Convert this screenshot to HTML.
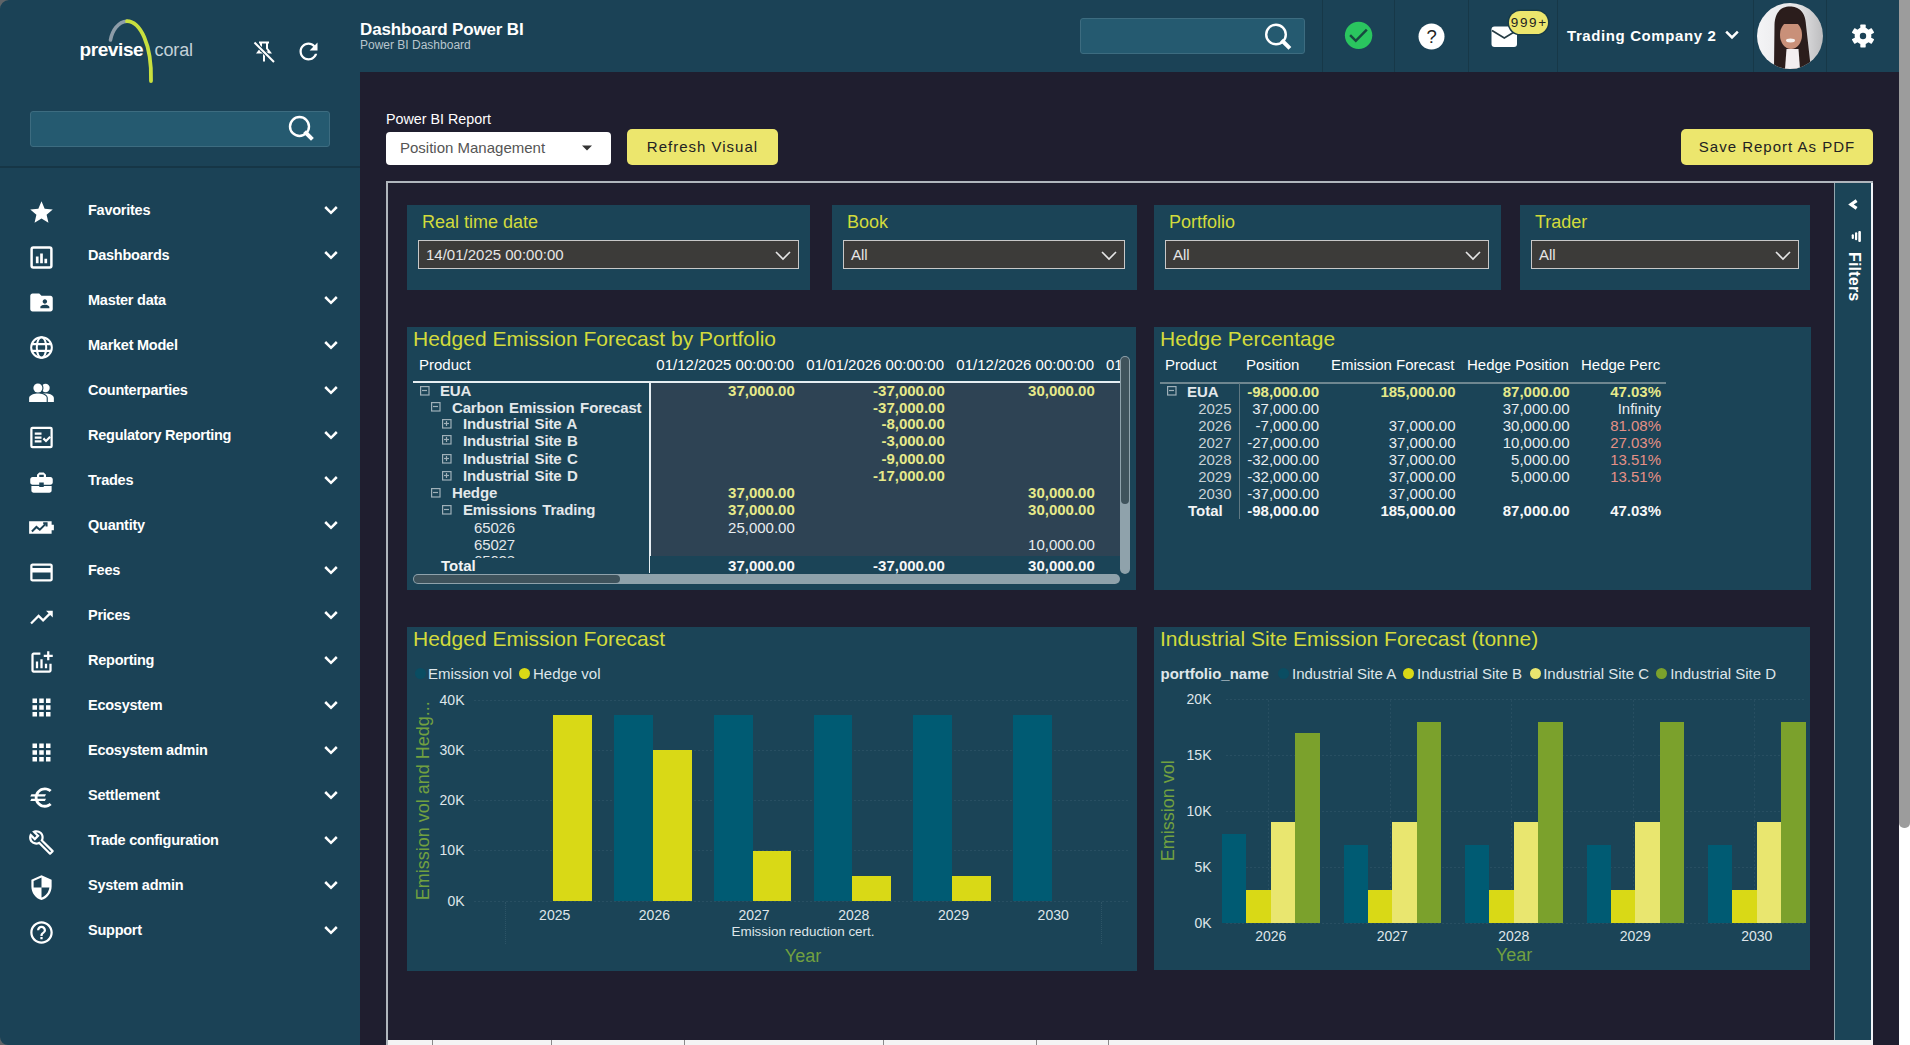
<!DOCTYPE html>
<html><head><meta charset="utf-8"><style>
*{margin:0;padding:0;box-sizing:border-box}
html,body{width:1910px;height:1045px;overflow:hidden;background:#1f1e2f;font-family:"Liberation Sans",sans-serif}
.a{position:absolute;white-space:nowrap}
#sb{position:absolute;left:0;top:0;width:360px;height:1045px;background:#1b4256}
#hd{position:absolute;left:360px;top:0;width:1539px;height:72px;background:#1b4256}
.mi{position:absolute;left:0;width:360px;height:45px;color:#fff}
.mi .t{position:absolute;left:88px;top:13.5px;font-weight:bold;font-size:14.5px;line-height:17px;letter-spacing:-0.25px;white-space:nowrap}
.mi svg.ic{position:absolute}
.mi svg.ch{position:absolute;left:319px;top:10px}
.card{position:absolute;background:#1b4457;overflow:hidden}
.ttl{position:absolute;color:#d2db3c;font-size:19px;white-space:nowrap}
.dd{position:absolute;background:#3c3b39;border:1.5px solid #c8c8c8;color:#e6e6e6;font-size:15px}
.dd span{position:absolute;left:7px;top:5px}
.dd svg{position:absolute;right:6px;top:8px}
.btn{position:absolute;background:#ece66d;border-radius:5px;color:#222;font-size:15px;letter-spacing:1px;text-align:center}
.vl{position:absolute;top:0;width:1px;height:72px;background:#173848}
</style></head><body>
<div id="sb"></div><div id="hd"></div><svg class="a" style="left:0;top:0" width="9" height="9"><path d="M0 0H9A9 9 0 0 0 0 9Z" fill="#5f6468"/></svg>
<svg class="a" style="left:60px;top:10px" width="160" height="80" viewBox="0 0 160 80">
<path d="M50.5 30 C 52 21, 58 11.5, 67 11.2" fill="none" stroke="#8d9ca8" stroke-width="3.6" stroke-linecap="round"/>
<path d="M67 11.2 C 80 11.5, 92 34, 91 71" fill="none" stroke="#c9e03e" stroke-width="3.8" stroke-linecap="round"/>
</svg>
<div class="a" style="left:79.5px;top:40.4px;color:#fff;font-size:19px;line-height:19px;font-weight:bold;letter-spacing:-0.4px">previse</div>
<div class="a" style="left:154.5px;top:41.3px;color:#c3d1d8;font-size:18px;line-height:18px;letter-spacing:-0.1px">coral</div>
<svg class="a" style="left:252px;top:40px" width="24" height="24" viewBox="0 0 24 24"><path d="M7 2.5h10M9 2.5v6l-3 4h12l-3-4v-6M12 12.5v9" fill="none" stroke="#fff" stroke-width="2"/><path d="M2 2l20 20" stroke="#1b4256" stroke-width="4"/><path d="M2.5 2.5l19.5 19.5" stroke="#fff" stroke-width="2"/></svg>
<svg class="a" style="left:295px;top:38px" width="27" height="27" viewBox="0 0 24 24"><path d="M17.65 6.35C16.2 4.9 14.21 4 12 4c-4.42 0-7.99 3.58-7.99 8s3.57 8 7.99 8c3.73 0 6.84-2.55 7.73-6h-2.08c-.82 2.33-3.04 4-5.65 4-3.31 0-6-2.69-6-6s2.69-6 6-6c1.66 0 3.14.69 4.22 1.78L13 11h7V4l-2.35 2.35z" fill="#fff"/></svg>
<div class="a" style="left:30px;top:111px;width:300px;height:36px;background:#255a70;border:1px solid #3d6c80;border-radius:3px"></div>
<svg class="a" style="left:287px;top:114px" width="28" height="28" viewBox="0 0 28 28"><circle cx="12.5" cy="12.5" r="9.5" fill="none" stroke="#fff" stroke-width="2.4"/><path d="M19 19l5 5" stroke="#fff" stroke-width="4" stroke-linecap="square"/></svg>
<div class="a" style="left:0;top:166px;width:360px;height:2px;background:#163646"></div>
<div class="mi" style="top:188px"><svg class="ic" style="left:28px;top:10.5px" width="27" height="27" viewBox="0 0 24 24" fill="#fff"><path d="M12 17.27L18.18 21l-1.64-7.03L22 9.24l-7.19-.61L12 2 9.19 8.63 2 9.24l5.46 4.73L5.82 21z"/></svg><span class="t">Favorites</span><svg class="ch" width="24" height="24" viewBox="0 0 24 24" fill="#fff"><path d="M6.2 9l5.8 5.8 5.8-5.8" fill="none" stroke="#fff" stroke-width="2.5"/></svg></div>
<div class="mi" style="top:233px"><svg class="ic" style="left:28px;top:10.5px" width="27" height="27" viewBox="0 0 24 24" fill="#fff"><rect x="3.2" y="3.2" width="17.6" height="17.6" rx="1.5" fill="none" stroke="#fff" stroke-width="2.2"/><path d="M7 11h2.4v6H7zM10.8 8.5h2.4V17h-2.4zM14.6 13h2.4v4h-2.4z"/></svg><span class="t">Dashboards</span><svg class="ch" width="24" height="24" viewBox="0 0 24 24" fill="#fff"><path d="M6.2 9l5.8 5.8 5.8-5.8" fill="none" stroke="#fff" stroke-width="2.5"/></svg></div>
<div class="mi" style="top:278px"><svg class="ic" style="left:28px;top:10.5px" width="27" height="27" viewBox="0 0 24 24" fill="#fff"><path d="M20 6h-8l-2-2H4c-1.1 0-1.99.9-1.99 2L2 18c0 1.1.9 2 2 2h16c1.1 0 2-.9 2-2V8c0-1.1-.9-2-2-2zm-5 3c1.1 0 2 .9 2 2s-.9 2-2 2-2-.9-2-2 .9-2 2-2zm4 8h-8v-1c0-1.33 2.67-2 4-2s4 .67 4 2v1z"/></svg><span class="t">Master data</span><svg class="ch" width="24" height="24" viewBox="0 0 24 24" fill="#fff"><path d="M6.2 9l5.8 5.8 5.8-5.8" fill="none" stroke="#fff" stroke-width="2.5"/></svg></div>
<div class="mi" style="top:323px"><svg class="ic" style="left:28px;top:10.5px" width="27" height="27" viewBox="0 0 24 24" fill="#fff"><g fill="none" stroke="#fff" stroke-width="1.8"><circle cx="12" cy="12" r="9.2"/><ellipse cx="12" cy="12" rx="4.2" ry="9.2"/><path d="M2.8 9h18.4M2.8 15h18.4"/></g></svg><span class="t">Market Model</span><svg class="ch" width="24" height="24" viewBox="0 0 24 24" fill="#fff"><path d="M6.2 9l5.8 5.8 5.8-5.8" fill="none" stroke="#fff" stroke-width="2.5"/></svg></div>
<div class="mi" style="top:368px"><svg class="ic" style="left:28px;top:10.5px" width="27" height="27" viewBox="0 0 24 24" fill="#fff"><circle cx="15.6" cy="8" r="3.7"/><path d="M13 13.2c1-.3 2-.4 2.8-.4 2.6 0 7.2 1.3 7.2 4v3.7H13z"/><circle cx="8.8" cy="8" r="5" fill="#1b4256"/><path d="M0 21.6v-4.8c0-3.2 5.6-4.8 8.8-4.8s8.8 1.6 8.8 4.8v4.8z" fill="#1b4256"/><circle cx="8.8" cy="8" r="4"/><path d="M1 20.5v-3.7c0-2.6 5-3.9 7.8-3.9s7.8 1.3 7.8 3.9v3.7z"/></svg><span class="t">Counterparties</span><svg class="ch" width="24" height="24" viewBox="0 0 24 24" fill="#fff"><path d="M6.2 9l5.8 5.8 5.8-5.8" fill="none" stroke="#fff" stroke-width="2.5"/></svg></div>
<div class="mi" style="top:413px"><svg class="ic" style="left:28px;top:10.5px" width="27" height="27" viewBox="0 0 24 24" fill="#fff"><g fill="none" stroke="#fff" stroke-width="2"><rect x="3" y="3.5" width="18" height="17" rx="1"/></g><path d="M6 7.5h6v2H6zM6 11h6v2H6zM6 14.5h6v2H6z"/><path d="M13 13.5l1.4-1.4 1.6 1.6 3-3 1.4 1.4-4.4 4.4z"/></svg><span class="t">Regulatory Reporting</span><svg class="ch" width="24" height="24" viewBox="0 0 24 24" fill="#fff"><path d="M6.2 9l5.8 5.8 5.8-5.8" fill="none" stroke="#fff" stroke-width="2.5"/></svg></div>
<div class="mi" style="top:458px"><svg class="ic" style="left:28px;top:10.5px" width="27" height="27" viewBox="0 0 24 24" fill="#fff"><path d="M10 16v-1H3.01L3 19c0 1.11.89 2 2 2h14c1.11 0 2-.89 2-2v-4h-7v1h-4zm10-9h-4.01V5l-2-2h-4l-2 2v2H4c-1.1 0-2 .9-2 2v3c0 1.11.89 2 2 2h6v-2h4v2h6c1.1 0 2-.9 2-2V9c0-1.1-.9-2-2-2zm-6 0h-4V5h4v2z"/></svg><span class="t">Trades</span><svg class="ch" width="24" height="24" viewBox="0 0 24 24" fill="#fff"><path d="M6.2 9l5.8 5.8 5.8-5.8" fill="none" stroke="#fff" stroke-width="2.5"/></svg></div>
<div class="mi" style="top:503px"><svg class="ic" style="left:28px;top:10.5px" width="27" height="27" viewBox="0 0 24 24" fill="#fff"><path d="M1 6.5h20v3h2v5h-2v3H1z"/><path d="M3.5 15.5l4-4 3 2.5 5-5" fill="none" stroke="#1b4256" stroke-width="1.8"/><path d="M13.5 8.2h3v3" fill="none" stroke="#1b4256" stroke-width="1.8"/></svg><span class="t">Quantity</span><svg class="ch" width="24" height="24" viewBox="0 0 24 24" fill="#fff"><path d="M6.2 9l5.8 5.8 5.8-5.8" fill="none" stroke="#fff" stroke-width="2.5"/></svg></div>
<div class="mi" style="top:548px"><svg class="ic" style="left:28px;top:10.5px" width="27" height="27" viewBox="0 0 24 24" fill="#fff"><path d="M20 4H4c-1.11 0-1.99.89-1.99 2L2 18c0 1.11.89 2 2 2h16c1.11 0 2-.89 2-2V6c0-1.11-.89-2-2-2zm0 14H4v-6h16v6zm0-10H4V6h16v2z"/></svg><span class="t">Fees</span><svg class="ch" width="24" height="24" viewBox="0 0 24 24" fill="#fff"><path d="M6.2 9l5.8 5.8 5.8-5.8" fill="none" stroke="#fff" stroke-width="2.5"/></svg></div>
<div class="mi" style="top:593px"><svg class="ic" style="left:28px;top:10.5px" width="27" height="27" viewBox="0 0 24 24" fill="#fff"><path d="M16 6l2.29 2.29-4.88 4.88-4-4L2 16.59 3.41 18l6-6 4 4 6.3-6.29L22 12V6z"/></svg><span class="t">Prices</span><svg class="ch" width="24" height="24" viewBox="0 0 24 24" fill="#fff"><path d="M6.2 9l5.8 5.8 5.8-5.8" fill="none" stroke="#fff" stroke-width="2.5"/></svg></div>
<div class="mi" style="top:638px"><svg class="ic" style="left:28px;top:10.5px" width="27" height="27" viewBox="0 0 24 24" fill="#fff"><path d="M22 5v2h-3v3h-2V7h-3V5h3V2h2v3h3zm-3 14H5V5h6V3H5c-1.1 0-2 .9-2 2v14c0 1.1.9 2 2 2h14c1.1 0 2-.9 2-2v-6h-2v6zm-4-6v4h2v-4h-2zm-4 4h2V9h-2v8zm-2 0v-6H7v6h2z"/></svg><span class="t">Reporting</span><svg class="ch" width="24" height="24" viewBox="0 0 24 24" fill="#fff"><path d="M6.2 9l5.8 5.8 5.8-5.8" fill="none" stroke="#fff" stroke-width="2.5"/></svg></div>
<div class="mi" style="top:683px"><svg class="ic" style="left:28px;top:10.5px" width="27" height="27" viewBox="0 0 24 24" fill="#fff"><path d="M4 8h4V4H4v4zm6 12h4v-4h-4v4zm-6 0h4v-4H4v4zm0-6h4v-4H4v4zm6 0h4v-4h-4v4zm6-10v4h4V4h-4zm-6 4h4V4h-4v4zm6 6h4v-4h-4v4zm0 6h4v-4h-4v4z"/></svg><span class="t">Ecosystem</span><svg class="ch" width="24" height="24" viewBox="0 0 24 24" fill="#fff"><path d="M6.2 9l5.8 5.8 5.8-5.8" fill="none" stroke="#fff" stroke-width="2.5"/></svg></div>
<div class="mi" style="top:728px"><svg class="ic" style="left:28px;top:10.5px" width="27" height="27" viewBox="0 0 24 24" fill="#fff"><path d="M4 8h4V4H4v4zm6 12h4v-4h-4v4zm-6 0h4v-4H4v4zm0-6h4v-4H4v4zm6 0h4v-4h-4v4zm6-10v4h4V4h-4zm-6 4h4V4h-4v4zm6 6h4v-4h-4v4zm0 6h4v-4h-4v4z"/></svg><span class="t">Ecosystem admin</span><svg class="ch" width="24" height="24" viewBox="0 0 24 24" fill="#fff"><path d="M6.2 9l5.8 5.8 5.8-5.8" fill="none" stroke="#fff" stroke-width="2.5"/></svg></div>
<div class="mi" style="top:773px"><svg class="ic" style="left:28px;top:10.5px" width="27" height="27" viewBox="0 0 24 24" fill="#fff"><path d="M15 18.5c-2.51 0-4.68-1.42-5.76-3.5H15l1-2H8.58c-.05-.33-.08-.66-.08-1s.03-.67.08-1H15l1-2H9.24C10.32 6.92 12.5 5.5 15 5.5c1.61 0 3.09.59 4.23 1.57L21 5.3C19.41 3.87 17.3 3 15 3c-3.92 0-7.24 2.510-8.48 6H3l-1 2h4.06c-.04.33-.06.66-.06 1s.02.67.06 1H3l-1 2h4.52c1.24 3.49 4.56 6 8.48 6 2.310 0 4.41-.87 6-2.3l-1.78-1.77c-1.13.98-2.6 1.57-4.22 1.57z"/></svg><span class="t">Settlement</span><svg class="ch" width="24" height="24" viewBox="0 0 24 24" fill="#fff"><path d="M6.2 9l5.8 5.8 5.8-5.8" fill="none" stroke="#fff" stroke-width="2.5"/></svg></div>
<div class="mi" style="top:818px"><svg class="ic" style="left:28px;top:10.5px" width="27" height="27" viewBox="0 0 24 24" fill="#fff"><path d="M22.61 18.99l-9.08-9.08c.93-2.34.45-5.1-1.44-7C9.79.61 6.21.4 3.66 2.26L7.5 6.11 6.08 7.52 2.25 3.690C.39 6.23.6 9.82 2.9 12.11c1.86 1.86 4.57 2.35 6.89 1.48l9.11 9.11c.39.39 1.02.39 1.41 0l2.3-2.3c.4-.38.4-1.01 0-1.41zm-3 1.6l-9.46-9.46c-.61.45-1.29.72-2 .82-1.360.2-2.79-.21-3.83-1.25C3.37 9.76 2.93 8.5 3 7.26l3.09 3.09 4.24-4.24-3.09-3.09c1.24-.07 2.49.37 3.44 1.31 1.08 1.08 1.49 2.57 1.24 3.96-.12.71-.42 1.37-.88 1.96l9.45 9.45-.88.89z"/></svg><span class="t">Trade configuration</span><svg class="ch" width="24" height="24" viewBox="0 0 24 24" fill="#fff"><path d="M6.2 9l5.8 5.8 5.8-5.8" fill="none" stroke="#fff" stroke-width="2.5"/></svg></div>
<div class="mi" style="top:863px"><svg class="ic" style="left:28px;top:10.5px" width="27" height="27" viewBox="0 0 24 24" fill="#fff"><path d="M12 1L3 5v6c0 5.55 3.84 10.74 9 12 5.16-1.26 9-6.450 9-12V5l-9-4zm0 10.99h7c-.53 4.12-3.28 7.79-7 8.94V12H5V6.3l7-3.11v8.8z"/></svg><span class="t">System admin</span><svg class="ch" width="24" height="24" viewBox="0 0 24 24" fill="#fff"><path d="M6.2 9l5.8 5.8 5.8-5.8" fill="none" stroke="#fff" stroke-width="2.5"/></svg></div>
<div class="mi" style="top:908px"><svg class="ic" style="left:28px;top:10.5px" width="27" height="27" viewBox="0 0 24 24" fill="#fff"><path d="M11 18h2v-2h-2v2zm1-16C6.48 2 2 6.48 2 12s4.48 10 10 10 10-4.48 10-10S17.52 2 12 2zm0 18c-4.41 0-8-3.59-8-8s3.59-8 8-8 8 3.59 8 8-3.59 8-8 8zm0-14c-2.21 0-4 1.79-4 4h2c0-1.1.9-2 2-2s2 .9 2 2c0 2-3 1.75-3 5h2c0-2.25 3-2.5 3-5 0-2.21-1.790-4-4-4z"/></svg><span class="t">Support</span><svg class="ch" width="24" height="24" viewBox="0 0 24 24" fill="#fff"><path d="M6.2 9l5.8 5.8 5.8-5.8" fill="none" stroke="#fff" stroke-width="2.5"/></svg></div>
<div class="a" style="left:360px;top:20.6px;color:#fff;font-size:17px;line-height:17px;font-weight:bold;letter-spacing:-0.15px">Dashboard Power BI</div>
<div class="a" style="left:360px;top:38.8px;color:#b9c6ce;font-size:12px;line-height:12px">Power BI Dashboard</div>
<div class="a" style="left:1080px;top:18px;width:225px;height:36px;background:#255a70;border:1px solid #3d6c80;border-radius:3px"></div>
<svg class="a" style="left:1262px;top:21px" width="30" height="30" viewBox="0 0 30 30"><circle cx="14" cy="13.5" r="9.8" fill="none" stroke="#fff" stroke-width="2.4"/><path d="M21 20.5l5.5 5.5" stroke="#fff" stroke-width="4" stroke-linecap="square"/></svg>
<div class="vl" style="left:1322px"></div><div class="vl" style="left:1394px"></div><div class="vl" style="left:1468px"></div><div class="vl" style="left:1557px"></div><div class="vl" style="left:1753px"></div><div class="vl" style="left:1826px"></div>
<svg class="a" style="left:1344px;top:20.5px" width="29" height="29" viewBox="0 0 29 29"><circle cx="14.6" cy="14.35" r="13.7" fill="#2ac55f"/><path d="M6.1 14.1l5.7 5.7 11-11.2" fill="none" stroke="#17483f" stroke-width="2.5"/></svg>
<svg class="a" style="left:1418px;top:23px" width="27" height="27" viewBox="0 0 27 27"><circle cx="13.5" cy="13.5" r="13" fill="#fff"/><text x="13.6" y="20.2" font-family="Liberation Sans" font-size="18.5" text-anchor="middle" fill="#222">?</text></svg>
<svg class="a" style="left:1491px;top:26px" width="27" height="22" viewBox="0 0 27 22"><rect x="0.5" y="0.5" width="25.5" height="20.5" rx="3" fill="#fff"/><path d="M1 4.5l12.3 7.5 12.3-7.5" fill="none" stroke="#263c44" stroke-width="1.6"/></svg>
<div class="a" style="left:1509px;top:11px;width:39px;height:23px;border-radius:12px;background:#ece66d;color:#222;font-size:13.5px;text-align:center;line-height:23px;letter-spacing:1.6px;text-indent:1.5px;box-shadow:0 0 0 1.5px #173a48">999+</div>
<div class="a" style="left:1567px;top:27px;color:#fff;font-size:15px;font-weight:bold;letter-spacing:0.6px">Trading Company 2</div>
<svg class="a" style="left:1722px;top:25px" width="20" height="20" viewBox="0 0 24 24"><path d="M5 8l7 7 7-7" fill="none" stroke="#fff" stroke-width="3"/></svg>
<svg class="a" style="left:1757px;top:3px" width="66" height="66" viewBox="0 0 66 66"><defs><clipPath id="avc"><circle cx="33" cy="33" r="33"/></clipPath><linearGradient id="avg" x1="0" y1="0" x2="1" y2="0"><stop offset="0" stop-color="#f4f4f6"/><stop offset="0.6" stop-color="#e6e6e8"/><stop offset="1" stop-color="#bdbdbf"/></linearGradient></defs><g clip-path="url(#avc)"><rect width="66" height="66" fill="url(#avg)"/><path d="M17 64 L17.5 22 C18 8 25 3.5 33 3.5 C41 3.5 48.5 8 49 22 L53.5 62 L46 66 L24 66 Z" fill="#2b1d1c"/><ellipse cx="34" cy="32" rx="11" ry="14" fill="#c99079"/><path d="M21.5 21 L22.5 12 C24 6 29 4.5 33.5 4.5 C38 4.5 44 6 45.5 12 L46.5 21 Z" fill="#2b1d1c"/><path d="M28 66 L29.5 46 L41.5 46 L43 66 Z" fill="#f3eef0"/><ellipse cx="33.5" cy="37.5" rx="4.5" ry="1.9" fill="#f6f0ee"/></g></svg>
<svg class="a" style="left:1851px;top:24.4px" width="24" height="24" viewBox="0 0 24 24"><g fill="#fff"><circle cx="12" cy="12" r="8.4"/><rect x="9.3" y="0.6" width="5.4" height="5" rx="0.6" transform="rotate(0 12 12)"/><rect x="9.3" y="0.6" width="5.4" height="5" rx="0.6" transform="rotate(60 12 12)"/><rect x="9.3" y="0.6" width="5.4" height="5" rx="0.6" transform="rotate(120 12 12)"/><rect x="9.3" y="0.6" width="5.4" height="5" rx="0.6" transform="rotate(180 12 12)"/><rect x="9.3" y="0.6" width="5.4" height="5" rx="0.6" transform="rotate(240 12 12)"/><rect x="9.3" y="0.6" width="5.4" height="5" rx="0.6" transform="rotate(300 12 12)"/></g><circle cx="12" cy="12" r="3.2" fill="#1b4256"/></svg>

<div class="a" style="left:1899px;top:0;width:11px;height:1045px;background:#fff"></div>
<div class="a" style="left:1899px;top:0;width:11px;height:828px;background:#9c9c9c;border-radius:0 0 5px 5px"></div>
<div class="a" style="left:386px;top:112.3px;color:#fff;font-size:14.3px;line-height:14.3px">Power BI Report</div>
<div class="a" style="left:386px;top:132px;width:225px;height:33px;background:#fff;border-radius:4px"></div>
<div class="a" style="left:400px;top:139px;color:#555;font-size:15px">Position Management</div>
<svg class="a" style="left:581px;top:144px" width="12" height="8" viewBox="0 0 12 8"><path d="M1 1.5h10L6 6.5z" fill="#333"/></svg>
<div class="btn" style="left:627px;top:129px;width:151px;height:36px;line-height:36px">Refresh Visual</div>
<div class="btn" style="left:1681px;top:129px;width:192px;height:36px;line-height:36px">Save Report As PDF</div>

<div class="a" style="left:386px;top:181px;width:1487px;height:900px;border:2px solid #b0b6bd"></div>
<div class="a" style="left:1834px;top:183px;width:37px;height:857px;background:#1b4457;border-left:1.5px solid #93a6ae"></div>
<div class="a" style="left:1871px;top:183px;width:2px;height:880px;background:#f0f4f8"></div>
<svg class="a" style="left:1848px;top:199px" width="11" height="11" viewBox="0 0 11 11"><path d="M8.6 1.6L3 5.5l5.6 3.9" fill="none" stroke="#fff" stroke-width="3.2" stroke-linejoin="miter"/></svg>
<svg class="a" style="left:1850px;top:230px" width="12" height="13" viewBox="0 0 12 13"><rect x="1.7" y="4.3" width="2.2" height="4.8" rx="1" fill="#fff"/><rect x="5" y="2.2" width="2.2" height="8.1" rx="1" fill="#fff"/><rect x="8.3" y="1" width="2.6" height="11" rx="1" fill="#fff"/></svg>
<div class="a" style="left:1843px;top:251.5px;width:20px;height:50px;"><div style="position:absolute;left:0;top:0;transform-origin:0 0;transform:translate(18.8px,0) rotate(90deg);color:#fff;font-size:16px;line-height:16px;font-weight:bold;letter-spacing:0.2px">Filters</div></div>
<div class="a" style="left:388px;top:1040px;width:1484px;height:5px;background:#f4f4f4"></div><div class="a" style="left:432px;top:1040px;width:1px;height:5px;background:#8a8a8a"></div><div class="a" style="left:551px;top:1040px;width:1px;height:5px;background:#8a8a8a"></div><div class="a" style="left:684px;top:1040px;width:1px;height:5px;background:#8a8a8a"></div><div class="a" style="left:883px;top:1040px;width:1px;height:5px;background:#8a8a8a"></div><div class="a" style="left:1036px;top:1040px;width:1px;height:5px;background:#8a8a8a"></div><div class="a" style="left:1108px;top:1040px;width:1px;height:5px;background:#8a8a8a"></div><svg class="a" style="left:0;top:1037px" width="8" height="8"><path d="M0 0A8 8 0 0 0 8 8H0Z" fill="#5f6468"/></svg>

<div class="card" style="left:407px;top:205px;width:403px;height:85px">
<div class="ttl" style="left:15px;top:7px;font-size:18px">Real time date</div>
<div class="dd" style="left:11px;top:35px;width:381px;height:29px"><span>14/01/2025 00:00:00</span>
<svg width="18" height="12" viewBox="0 0 18 12"><path d="M2 3l7 7 7-7" fill="none" stroke="#e6e6e6" stroke-width="1.6"/></svg></div></div>
<div class="card" style="left:832px;top:205px;width:305px;height:85px">
<div class="ttl" style="left:15px;top:7px;font-size:18px">Book</div>
<div class="dd" style="left:11px;top:35px;width:282px;height:29px"><span>All</span>
<svg width="18" height="12" viewBox="0 0 18 12"><path d="M2 3l7 7 7-7" fill="none" stroke="#e6e6e6" stroke-width="1.6"/></svg></div></div>
<div class="card" style="left:1154px;top:205px;width:347px;height:85px">
<div class="ttl" style="left:15px;top:7px;font-size:18px">Portfolio</div>
<div class="dd" style="left:11px;top:35px;width:324px;height:29px"><span>All</span>
<svg width="18" height="12" viewBox="0 0 18 12"><path d="M2 3l7 7 7-7" fill="none" stroke="#e6e6e6" stroke-width="1.6"/></svg></div></div>
<div class="card" style="left:1520px;top:205px;width:290px;height:85px">
<div class="ttl" style="left:15px;top:7px;font-size:18px">Trader</div>
<div class="dd" style="left:11px;top:35px;width:268px;height:29px"><span>All</span>
<svg width="18" height="12" viewBox="0 0 18 12"><path d="M2 3l7 7 7-7" fill="none" stroke="#e6e6e6" stroke-width="1.6"/></svg></div></div>
<div class="card" style="left:407px;top:327px;width:729px;height:263px"></div>
<div class="a" style="left:413px;top:326px;color:#d2db3c;font-size:21px;line-height:26px">Hedged Emission Forecast by Portfolio</div>
<div class="a" style="left:650px;top:383px;width:470px;height:173px;background:#2e4354"></div>
<div class="a" style="left:407px;top:350px;width:714px;height:32px;overflow:hidden"><div class="a" style="left:12px;top:6px;color:#fff;font-size:15px">Product</div><div class="a" style="right:327px;top:6px;color:#fff;font-size:15px">01/12/2025 00:00:00</div><div class="a" style="right:177px;top:6px;color:#fff;font-size:15px">01/01/2026 00:00:00</div><div class="a" style="right:27px;top:6px;color:#fff;font-size:15px">01/12/2026 00:00:00</div><div class="a" style="left:699px;top:6px;color:#fff;font-size:15px">01/12/2027 00:00:00</div></div>
<div class="a" style="left:413px;top:381px;width:708px;height:2px;background:#e6eef2"></div>
<div class="a" style="left:649px;top:383px;width:1.5px;height:190px;background:#e6eef2"></div>
<div class="a" style="left:407px;top:383px;width:714px;height:175px;overflow:hidden">
<svg class="a" style="left:13px;top:2.5px" width="10" height="10" viewBox="0 0 10 10"><rect x="0.6" y="0.6" width="8.4" height="8.4" fill="none" stroke="#9fb0b8" stroke-width="1.2"/><path d="M2 4.5h5" stroke="#9fb0b8" stroke-width="1.2"/></svg>
<div class="a" style="left:33px;top:-1.3000000000000007px;color:#e3e8eb;font-size:15px;font-weight:bold;letter-spacing:Nonepx;line-height:17px;word-spacing:1.5px;letter-spacing:-0.15px">EUA</div>
<div class="a" style="right:326.20000000000005px;top:-1.3000000000000007px;color:#e6e98a;font-size:15px;font-weight:bold;line-height:17px">37,000.00</div>
<div class="a" style="right:176.20000000000005px;top:-1.3000000000000007px;color:#e6e98a;font-size:15px;font-weight:bold;line-height:17px">-37,000.00</div>
<div class="a" style="right:26.200000000000045px;top:-1.3000000000000007px;color:#e6e98a;font-size:15px;font-weight:bold;line-height:17px">30,000.00</div>
<svg class="a" style="left:24px;top:19.399999999999977px" width="10" height="10" viewBox="0 0 10 10"><rect x="0.6" y="0.6" width="8.4" height="8.4" fill="none" stroke="#9fb0b8" stroke-width="1.2"/><path d="M2 4.5h5" stroke="#9fb0b8" stroke-width="1.2"/></svg>
<div class="a" style="left:45px;top:15.599999999999977px;color:#e3e8eb;font-size:15px;font-weight:bold;letter-spacing:Nonepx;line-height:17px;word-spacing:1.5px;letter-spacing:-0.15px">Carbon Emission Forecast</div>
<div class="a" style="right:176.20000000000005px;top:15.599999999999977px;color:#e6e98a;font-size:15px;font-weight:bold;line-height:17px">-37,000.00</div>
<svg class="a" style="left:35px;top:35.80000000000001px" width="10" height="10" viewBox="0 0 10 10"><rect x="0.6" y="0.6" width="8.4" height="8.4" fill="none" stroke="#9fb0b8" stroke-width="1.2"/><path d="M2 4.5h5" stroke="#9fb0b8" stroke-width="1.2"/><path d="M4.5 2v5" stroke="#9fb0b8" stroke-width="1.2"/></svg>
<div class="a" style="left:56px;top:32.000000000000014px;color:#e3e8eb;font-size:15px;font-weight:bold;letter-spacing:Nonepx;line-height:17px;word-spacing:1.5px;letter-spacing:-0.15px">Industrial Site A</div>
<div class="a" style="right:176.20000000000005px;top:32.000000000000014px;color:#e6e98a;font-size:15px;font-weight:bold;line-height:17px">-8,000.00</div>
<svg class="a" style="left:35px;top:52.39999999999998px" width="10" height="10" viewBox="0 0 10 10"><rect x="0.6" y="0.6" width="8.4" height="8.4" fill="none" stroke="#9fb0b8" stroke-width="1.2"/><path d="M2 4.5h5" stroke="#9fb0b8" stroke-width="1.2"/><path d="M4.5 2v5" stroke="#9fb0b8" stroke-width="1.2"/></svg>
<div class="a" style="left:56px;top:48.59999999999998px;color:#e3e8eb;font-size:15px;font-weight:bold;letter-spacing:Nonepx;line-height:17px;word-spacing:1.5px;letter-spacing:-0.15px">Industrial Site B</div>
<div class="a" style="right:176.20000000000005px;top:48.59999999999998px;color:#e6e98a;font-size:15px;font-weight:bold;line-height:17px">-3,000.00</div>
<svg class="a" style="left:35px;top:70.5px" width="10" height="10" viewBox="0 0 10 10"><rect x="0.6" y="0.6" width="8.4" height="8.4" fill="none" stroke="#9fb0b8" stroke-width="1.2"/><path d="M2 4.5h5" stroke="#9fb0b8" stroke-width="1.2"/><path d="M4.5 2v5" stroke="#9fb0b8" stroke-width="1.2"/></svg>
<div class="a" style="left:56px;top:66.7px;color:#e3e8eb;font-size:15px;font-weight:bold;letter-spacing:Nonepx;line-height:17px;word-spacing:1.5px;letter-spacing:-0.15px">Industrial Site C</div>
<div class="a" style="right:176.20000000000005px;top:66.7px;color:#e6e98a;font-size:15px;font-weight:bold;line-height:17px">-9,000.00</div>
<svg class="a" style="left:35px;top:87.5px" width="10" height="10" viewBox="0 0 10 10"><rect x="0.6" y="0.6" width="8.4" height="8.4" fill="none" stroke="#9fb0b8" stroke-width="1.2"/><path d="M2 4.5h5" stroke="#9fb0b8" stroke-width="1.2"/><path d="M4.5 2v5" stroke="#9fb0b8" stroke-width="1.2"/></svg>
<div class="a" style="left:56px;top:83.7px;color:#e3e8eb;font-size:15px;font-weight:bold;letter-spacing:Nonepx;line-height:17px;word-spacing:1.5px;letter-spacing:-0.15px">Industrial Site D</div>
<div class="a" style="right:176.20000000000005px;top:83.7px;color:#e6e98a;font-size:15px;font-weight:bold;line-height:17px">-17,000.00</div>
<svg class="a" style="left:24px;top:104.5px" width="10" height="10" viewBox="0 0 10 10"><rect x="0.6" y="0.6" width="8.4" height="8.4" fill="none" stroke="#9fb0b8" stroke-width="1.2"/><path d="M2 4.5h5" stroke="#9fb0b8" stroke-width="1.2"/></svg>
<div class="a" style="left:45px;top:100.7px;color:#e3e8eb;font-size:15px;font-weight:bold;letter-spacing:Nonepx;line-height:17px;word-spacing:1.5px;letter-spacing:-0.15px">Hedge</div>
<div class="a" style="right:326.20000000000005px;top:100.7px;color:#e6e98a;font-size:15px;font-weight:bold;line-height:17px">37,000.00</div>
<div class="a" style="right:26.200000000000045px;top:100.7px;color:#e6e98a;font-size:15px;font-weight:bold;line-height:17px">30,000.00</div>
<svg class="a" style="left:35px;top:121.5px" width="10" height="10" viewBox="0 0 10 10"><rect x="0.6" y="0.6" width="8.4" height="8.4" fill="none" stroke="#9fb0b8" stroke-width="1.2"/><path d="M2 4.5h5" stroke="#9fb0b8" stroke-width="1.2"/></svg>
<div class="a" style="left:56px;top:117.7px;color:#e3e8eb;font-size:15px;font-weight:bold;letter-spacing:Nonepx;line-height:17px;word-spacing:1.5px;letter-spacing:-0.15px">Emissions Trading</div>
<div class="a" style="right:326.20000000000005px;top:117.7px;color:#e6e98a;font-size:15px;font-weight:bold;line-height:17px">37,000.00</div>
<div class="a" style="right:26.200000000000045px;top:117.7px;color:#e6e98a;font-size:15px;font-weight:bold;line-height:17px">30,000.00</div>
<div class="a" style="left:67px;top:135.49999999999994px;color:#e3e8eb;font-size:15px;font-weight:normal;letter-spacing:Nonepx;line-height:17px;word-spacing:1.5px;letter-spacing:-0.15px">65026</div>
<div class="a" style="right:326.20000000000005px;top:135.49999999999994px;color:#e8edf0;font-size:15px;font-weight:normal;line-height:17px">25,000.00</div>
<div class="a" style="left:67px;top:152.7px;color:#e3e8eb;font-size:15px;font-weight:normal;letter-spacing:Nonepx;line-height:17px;word-spacing:1.5px;letter-spacing:-0.15px">65027</div>
<div class="a" style="right:26.200000000000045px;top:152.7px;color:#e8edf0;font-size:15px;font-weight:normal;line-height:17px">10,000.00</div>
<div class="a" style="left:67px;top:168.7px;color:#e3e8eb;font-size:15px;font-weight:normal;letter-spacing:Nonepx;line-height:17px;word-spacing:1.5px;letter-spacing:-0.15px">65028</div>
</div>
<div class="a" style="left:650px;top:556px;width:470px;height:17px;background:#1b4457"></div>
<div class="a" style="left:441px;top:557.2px;color:#f2f4f5;font-size:15px;font-weight:bold;letter-spacing:0px;line-height:17px">Total</div>
<div class="a" style="right:1115.2px;top:557.2px;color:#f7f7f7;font-size:15px;font-weight:bold;letter-spacing:0px;line-height:17px">37,000.00</div>
<div class="a" style="right:965.2px;top:557.2px;color:#f7f7f7;font-size:15px;font-weight:bold;letter-spacing:0px;line-height:17px">-37,000.00</div>
<div class="a" style="right:815.2px;top:557.2px;color:#f7f7f7;font-size:15px;font-weight:bold;letter-spacing:0px;line-height:17px">30,000.00</div>
<div class="a" style="left:1120px;top:356px;width:10px;height:218px;background:#8fa2ab;border-radius:5px"></div>
<div class="a" style="left:1121.2px;top:357.2px;width:7.6px;height:147px;background:#3f535c;border-radius:4px"></div>
<div class="a" style="left:413px;top:574px;width:707px;height:10px;background:#8fa2ab;border-radius:5px"></div>
<div class="a" style="left:414.2px;top:575.2px;width:206px;height:7.6px;background:#3f535c;border-radius:4px"></div>
<div class="card" style="left:1154px;top:327px;width:657px;height:263px"></div>
<div class="a" style="left:1160px;top:326px;color:#d2db3c;font-size:21px;line-height:26px">Hedge Percentage</div>
<div class="a" style="left:1165px;top:356px;color:#fff;font-size:15px">Product</div>
<div class="a" style="left:1246px;top:356px;color:#fff;font-size:15px">Position</div>
<div class="a" style="left:1331px;top:356px;color:#fff;font-size:15px">Emission Forecast</div>
<div class="a" style="left:1467px;top:356px;color:#fff;font-size:15px">Hedge Position</div>
<div class="a" style="left:1581px;top:356px;color:#fff;font-size:15px">Hedge Perc</div>
<div class="a" style="left:1160px;top:382px;width:506px;height:1.5px;background:#6f8790"></div>
<div class="a" style="left:1239px;top:383px;width:1px;height:136px;background:#5f7882"></div>
<svg class="a" style="left:1167px;top:385.5px" width="10" height="10" viewBox="0 0 10 10"><rect x="0.6" y="0.6" width="8.4" height="8.4" fill="none" stroke="#9fb0b8" stroke-width="1.2"/><path d="M2 4.5h5" stroke="#9fb0b8" stroke-width="1.2"/></svg>
<div class="a" style="left:1187px;top:382.8px;color:#e3e8eb;font-size:15px;font-weight:bold;letter-spacing:0px;line-height:17px">EUA</div>
<div class="a" style="right:591px;top:382.8px;color:#e6e98a;font-size:15px;font-weight:bold;letter-spacing:0px;line-height:17px">-98,000.00</div>
<div class="a" style="right:454.5px;top:382.8px;color:#e6e98a;font-size:15px;font-weight:bold;letter-spacing:0px;line-height:17px">185,000.00</div>
<div class="a" style="right:340.5px;top:382.8px;color:#e6e98a;font-size:15px;font-weight:bold;letter-spacing:0px;line-height:17px">87,000.00</div>
<div class="a" style="right:249px;top:382.8px;color:#e6e98a;font-size:15px;font-weight:bold;letter-spacing:0px;line-height:17px">47.03%</div>
<div class="a" style="right:678.5px;top:399.8px;color:#c9d2d6;font-size:15px;font-weight:normal;letter-spacing:0px;line-height:17px">2025</div>
<div class="a" style="right:591px;top:399.8px;color:#e8edf0;font-size:15px;font-weight:normal;letter-spacing:0px;line-height:17px">37,000.00</div>
<div class="a" style="right:340.5px;top:399.8px;color:#e8edf0;font-size:15px;font-weight:normal;letter-spacing:0px;line-height:17px">37,000.00</div>
<div class="a" style="right:249px;top:399.8px;color:#e8edf0;font-size:15px;font-weight:normal;letter-spacing:0px;line-height:17px">Infinity</div>
<div class="a" style="right:678.5px;top:416.8px;color:#c9d2d6;font-size:15px;font-weight:normal;letter-spacing:0px;line-height:17px">2026</div>
<div class="a" style="right:591px;top:416.8px;color:#e8edf0;font-size:15px;font-weight:normal;letter-spacing:0px;line-height:17px">-7,000.00</div>
<div class="a" style="right:454.5px;top:416.8px;color:#e8edf0;font-size:15px;font-weight:normal;letter-spacing:0px;line-height:17px">37,000.00</div>
<div class="a" style="right:340.5px;top:416.8px;color:#e8edf0;font-size:15px;font-weight:normal;letter-spacing:0px;line-height:17px">30,000.00</div>
<div class="a" style="right:249px;top:416.8px;color:#e59086;font-size:15px;font-weight:normal;letter-spacing:0px;line-height:17px">81.08%</div>
<div class="a" style="right:678.5px;top:433.8px;color:#c9d2d6;font-size:15px;font-weight:normal;letter-spacing:0px;line-height:17px">2027</div>
<div class="a" style="right:591px;top:433.8px;color:#e8edf0;font-size:15px;font-weight:normal;letter-spacing:0px;line-height:17px">-27,000.00</div>
<div class="a" style="right:454.5px;top:433.8px;color:#e8edf0;font-size:15px;font-weight:normal;letter-spacing:0px;line-height:17px">37,000.00</div>
<div class="a" style="right:340.5px;top:433.8px;color:#e8edf0;font-size:15px;font-weight:normal;letter-spacing:0px;line-height:17px">10,000.00</div>
<div class="a" style="right:249px;top:433.8px;color:#e59086;font-size:15px;font-weight:normal;letter-spacing:0px;line-height:17px">27.03%</div>
<div class="a" style="right:678.5px;top:450.8px;color:#c9d2d6;font-size:15px;font-weight:normal;letter-spacing:0px;line-height:17px">2028</div>
<div class="a" style="right:591px;top:450.8px;color:#e8edf0;font-size:15px;font-weight:normal;letter-spacing:0px;line-height:17px">-32,000.00</div>
<div class="a" style="right:454.5px;top:450.8px;color:#e8edf0;font-size:15px;font-weight:normal;letter-spacing:0px;line-height:17px">37,000.00</div>
<div class="a" style="right:340.5px;top:450.8px;color:#e8edf0;font-size:15px;font-weight:normal;letter-spacing:0px;line-height:17px">5,000.00</div>
<div class="a" style="right:249px;top:450.8px;color:#e59086;font-size:15px;font-weight:normal;letter-spacing:0px;line-height:17px">13.51%</div>
<div class="a" style="right:678.5px;top:467.8px;color:#c9d2d6;font-size:15px;font-weight:normal;letter-spacing:0px;line-height:17px">2029</div>
<div class="a" style="right:591px;top:467.8px;color:#e8edf0;font-size:15px;font-weight:normal;letter-spacing:0px;line-height:17px">-32,000.00</div>
<div class="a" style="right:454.5px;top:467.8px;color:#e8edf0;font-size:15px;font-weight:normal;letter-spacing:0px;line-height:17px">37,000.00</div>
<div class="a" style="right:340.5px;top:467.8px;color:#e8edf0;font-size:15px;font-weight:normal;letter-spacing:0px;line-height:17px">5,000.00</div>
<div class="a" style="right:249px;top:467.8px;color:#e59086;font-size:15px;font-weight:normal;letter-spacing:0px;line-height:17px">13.51%</div>
<div class="a" style="right:678.5px;top:484.8px;color:#c9d2d6;font-size:15px;font-weight:normal;letter-spacing:0px;line-height:17px">2030</div>
<div class="a" style="right:591px;top:484.8px;color:#e8edf0;font-size:15px;font-weight:normal;letter-spacing:0px;line-height:17px">-37,000.00</div>
<div class="a" style="right:454.5px;top:484.8px;color:#e8edf0;font-size:15px;font-weight:normal;letter-spacing:0px;line-height:17px">37,000.00</div>
<div class="a" style="left:1188px;top:501.8px;color:#f2f4f5;font-size:15px;font-weight:bold;letter-spacing:0px;line-height:17px">Total</div>
<div class="a" style="right:591px;top:501.8px;color:#f7f7f7;font-size:15px;font-weight:bold;letter-spacing:0px;line-height:17px">-98,000.00</div>
<div class="a" style="right:454.5px;top:501.8px;color:#f7f7f7;font-size:15px;font-weight:bold;letter-spacing:0px;line-height:17px">185,000.00</div>
<div class="a" style="right:340.5px;top:501.8px;color:#f7f7f7;font-size:15px;font-weight:bold;letter-spacing:0px;line-height:17px">87,000.00</div>
<div class="a" style="right:249px;top:501.8px;color:#f7f7f7;font-size:15px;font-weight:bold;letter-spacing:0px;line-height:17px">47.03%</div>
<div class="card" style="left:407px;top:627px;width:730px;height:344px"></div>
<div class="a" style="left:413px;top:626px;color:#d2db3c;font-size:21px;line-height:26px">Hedged Emission Forecast</div>
<div class="a" style="left:414.5px;top:668.0px;width:11.0px;height:11.0px;border-radius:50%;background:#0a4d62"></div>
<div class="a" style="left:428px;top:664.5px;font-size:15px;line-height:18.0px;color:#dfe6ea;font-weight:normal">Emission vol</div>
<div class="a" style="left:519.0px;top:668.0px;width:11.0px;height:11.0px;border-radius:50%;background:#d9d916"></div>
<div class="a" style="left:533px;top:664.5px;font-size:15px;line-height:18.0px;color:#dfe6ea;font-weight:normal">Hedge vol</div>
<div class="a" style="left:474px;top:900.5px;width:656px;height:1px;background-image:linear-gradient(90deg,#58788a 50%,transparent 50%);background-size:4px 1px;opacity:0.22"></div>
<div class="a" style="right:1445.5px;top:892.6px;font-size:14px;line-height:16.8px;color:#dfe6ea;font-weight:normal">0K</div>
<div class="a" style="left:474px;top:850.3px;width:656px;height:1px;background-image:linear-gradient(90deg,#58788a 50%,transparent 50%);background-size:4px 1px;opacity:0.22"></div>
<div class="a" style="right:1445.5px;top:842.4px;font-size:14px;line-height:16.8px;color:#dfe6ea;font-weight:normal">10K</div>
<div class="a" style="left:474px;top:800.1px;width:656px;height:1px;background-image:linear-gradient(90deg,#58788a 50%,transparent 50%);background-size:4px 1px;opacity:0.22"></div>
<div class="a" style="right:1445.5px;top:792.2px;font-size:14px;line-height:16.8px;color:#dfe6ea;font-weight:normal">20K</div>
<div class="a" style="left:474px;top:749.9px;width:656px;height:1px;background-image:linear-gradient(90deg,#58788a 50%,transparent 50%);background-size:4px 1px;opacity:0.22"></div>
<div class="a" style="right:1445.5px;top:742.0px;font-size:14px;line-height:16.8px;color:#dfe6ea;font-weight:normal">30K</div>
<div class="a" style="left:474px;top:699.7px;width:656px;height:1px;background-image:linear-gradient(90deg,#58788a 50%,transparent 50%);background-size:4px 1px;opacity:0.22"></div>
<div class="a" style="right:1445.5px;top:691.8px;font-size:14px;line-height:16.8px;color:#dfe6ea;font-weight:normal">40K</div>
<div class="a" style="left:273.5px;top:789.7px;width:300px;text-align:center;font-size:18px;line-height:21.6px;color:#72a040;transform:rotate(-90deg)">Emission vol and Hedg...</div>
<div class="a" style="left:553.2px;top:715.3px;width:38.8px;height:185.7px;background:#d9d916"></div>
<div class="a" style="left:404.70000000000005px;width:300px;text-align:center;top:906.6px;font-size:14px;line-height:16.8px;color:#dfe6ea;font-weight:normal">2025</div>
<div class="a" style="left:614.1px;top:715.3px;width:38.8px;height:185.7px;background:#005b73"></div>
<div class="a" style="left:652.9px;top:750.4px;width:38.8px;height:150.6px;background:#d9d916"></div>
<div class="a" style="left:504.4000000000001px;width:300px;text-align:center;top:906.6px;font-size:14px;line-height:16.8px;color:#dfe6ea;font-weight:normal">2026</div>
<div class="a" style="left:713.8px;top:715.3px;width:38.8px;height:185.7px;background:#005b73"></div>
<div class="a" style="left:752.6px;top:850.8px;width:38.8px;height:50.2px;background:#d9d916"></div>
<div class="a" style="left:604.1px;width:300px;text-align:center;top:906.6px;font-size:14px;line-height:16.8px;color:#dfe6ea;font-weight:normal">2027</div>
<div class="a" style="left:813.5px;top:715.3px;width:38.8px;height:185.7px;background:#005b73"></div>
<div class="a" style="left:852.3px;top:875.9px;width:38.8px;height:25.1px;background:#d9d916"></div>
<div class="a" style="left:703.8000000000001px;width:300px;text-align:center;top:906.6px;font-size:14px;line-height:16.8px;color:#dfe6ea;font-weight:normal">2028</div>
<div class="a" style="left:913.2px;top:715.3px;width:38.8px;height:185.7px;background:#005b73"></div>
<div class="a" style="left:952.0px;top:875.9px;width:38.8px;height:25.1px;background:#d9d916"></div>
<div class="a" style="left:803.5px;width:300px;text-align:center;top:906.6px;font-size:14px;line-height:16.8px;color:#dfe6ea;font-weight:normal">2029</div>
<div class="a" style="left:1012.9px;top:715.3px;width:38.8px;height:185.7px;background:#005b73"></div>
<div class="a" style="left:903.2px;width:300px;text-align:center;top:906.6px;font-size:14px;line-height:16.8px;color:#dfe6ea;font-weight:normal">2030</div>
<div class="a" style="left:653px;width:300px;text-align:center;top:924.0px;font-size:13.4px;line-height:16.1px;color:#dfe6ea;font-weight:normal">Emission reduction cert.</div>
<div class="a" style="left:653px;width:300px;text-align:center;top:945.7px;font-size:18px;line-height:21.6px;color:#72a040;font-weight:normal">Year</div>
<div class="a" style="left:505px;top:902px;width:597px;height:42px;border-left:1px dotted rgba(120,150,165,0.2);border-right:1px dotted rgba(120,150,165,0.2)"></div>
<div class="card" style="left:1154px;top:627px;width:656px;height:343px"></div>
<div class="a" style="left:1160px;top:626px;color:#d2db3c;font-size:21px;line-height:26px">Industrial Site Emission Forecast (tonne)</div>
<div class="a" style="left:1160.5px;top:664.5px;font-size:15px;line-height:18.0px;color:#dfe6ea;font-weight:bold">portfolio_name</div>
<div class="a" style="left:1278.2px;top:668.0px;width:11.0px;height:11.0px;border-radius:50%;background:#0a4d62"></div>
<div class="a" style="left:1292px;top:664.5px;font-size:15px;line-height:18.0px;color:#dfe6ea;font-weight:normal">Industrial Site A</div>
<div class="a" style="left:1403.0px;top:668.0px;width:11.0px;height:11.0px;border-radius:50%;background:#d9d916"></div>
<div class="a" style="left:1417px;top:664.5px;font-size:15px;line-height:18.0px;color:#dfe6ea;font-weight:normal">Industrial Site B</div>
<div class="a" style="left:1529.9px;top:668.0px;width:11.0px;height:11.0px;border-radius:50%;background:#e9e66f"></div>
<div class="a" style="left:1543.2px;top:664.5px;font-size:15px;line-height:18.0px;color:#dfe6ea;font-weight:normal">Industrial Site C</div>
<div class="a" style="left:1656.4px;top:668.0px;width:11.0px;height:11.0px;border-radius:50%;background:#7ba12c"></div>
<div class="a" style="left:1670.2px;top:664.5px;font-size:15px;line-height:18.0px;color:#dfe6ea;font-weight:normal">Industrial Site D</div>
<div class="a" style="left:1226px;top:922.5px;width:580px;height:1px;background-image:linear-gradient(90deg,#58788a 50%,transparent 50%);background-size:4px 1px;opacity:0.22"></div>
<div class="a" style="right:698.5px;top:914.6px;font-size:14px;line-height:16.8px;color:#dfe6ea;font-weight:normal">0K</div>
<div class="a" style="left:1226px;top:866.6px;width:580px;height:1px;background-image:linear-gradient(90deg,#58788a 50%,transparent 50%);background-size:4px 1px;opacity:0.22"></div>
<div class="a" style="right:698.5px;top:858.7px;font-size:14px;line-height:16.8px;color:#dfe6ea;font-weight:normal">5K</div>
<div class="a" style="left:1226px;top:810.7px;width:580px;height:1px;background-image:linear-gradient(90deg,#58788a 50%,transparent 50%);background-size:4px 1px;opacity:0.22"></div>
<div class="a" style="right:698.5px;top:802.8px;font-size:14px;line-height:16.8px;color:#dfe6ea;font-weight:normal">10K</div>
<div class="a" style="left:1226px;top:754.8px;width:580px;height:1px;background-image:linear-gradient(90deg,#58788a 50%,transparent 50%);background-size:4px 1px;opacity:0.22"></div>
<div class="a" style="right:698.5px;top:746.9px;font-size:14px;line-height:16.8px;color:#dfe6ea;font-weight:normal">15K</div>
<div class="a" style="left:1226px;top:698.9px;width:580px;height:1px;background-image:linear-gradient(90deg,#58788a 50%,transparent 50%);background-size:4px 1px;opacity:0.22"></div>
<div class="a" style="right:698.5px;top:691.0px;font-size:14px;line-height:16.8px;color:#dfe6ea;font-weight:normal">20K</div>
<div class="a" style="left:1018.5px;top:800.2px;width:300px;text-align:center;font-size:18px;line-height:21.6px;color:#72a040;transform:rotate(-90deg)">Emission vol</div>
<div class="a" style="left:1268.0px;top:700px;width:1px;height:223px;background-image:linear-gradient(180deg,#58788a 50%,transparent 50%);background-size:1px 4px;opacity:0.2"></div>
<div class="a" style="left:1222.0px;top:833.6px;width:24.4px;height:89.4px;background:#005b73"></div>
<div class="a" style="left:1246.4px;top:889.5px;width:24.4px;height:33.5px;background:#d9d916"></div>
<div class="a" style="left:1270.8px;top:822.4px;width:24.4px;height:100.6px;background:#e9e66f"></div>
<div class="a" style="left:1295.2px;top:732.9px;width:24.4px;height:190.1px;background:#7ba12c"></div>
<div class="a" style="left:1120.8px;width:300px;text-align:center;top:927.6px;font-size:14px;line-height:16.8px;color:#dfe6ea;font-weight:normal">2026</div>
<div class="a" style="left:1389.5px;top:700px;width:1px;height:223px;background-image:linear-gradient(180deg,#58788a 50%,transparent 50%);background-size:1px 4px;opacity:0.2"></div>
<div class="a" style="left:1343.5px;top:844.7px;width:24.4px;height:78.3px;background:#005b73"></div>
<div class="a" style="left:1367.9px;top:889.5px;width:24.4px;height:33.5px;background:#d9d916"></div>
<div class="a" style="left:1392.3px;top:822.4px;width:24.4px;height:100.6px;background:#e9e66f"></div>
<div class="a" style="left:1416.7px;top:721.8px;width:24.4px;height:201.2px;background:#7ba12c"></div>
<div class="a" style="left:1242.3px;width:300px;text-align:center;top:927.6px;font-size:14px;line-height:16.8px;color:#dfe6ea;font-weight:normal">2027</div>
<div class="a" style="left:1511.0px;top:700px;width:1px;height:223px;background-image:linear-gradient(180deg,#58788a 50%,transparent 50%);background-size:1px 4px;opacity:0.2"></div>
<div class="a" style="left:1465.0px;top:844.7px;width:24.4px;height:78.3px;background:#005b73"></div>
<div class="a" style="left:1489.4px;top:889.5px;width:24.4px;height:33.5px;background:#d9d916"></div>
<div class="a" style="left:1513.8px;top:822.4px;width:24.4px;height:100.6px;background:#e9e66f"></div>
<div class="a" style="left:1538.2px;top:721.8px;width:24.4px;height:201.2px;background:#7ba12c"></div>
<div class="a" style="left:1363.8px;width:300px;text-align:center;top:927.6px;font-size:14px;line-height:16.8px;color:#dfe6ea;font-weight:normal">2028</div>
<div class="a" style="left:1632.5px;top:700px;width:1px;height:223px;background-image:linear-gradient(180deg,#58788a 50%,transparent 50%);background-size:1px 4px;opacity:0.2"></div>
<div class="a" style="left:1586.5px;top:844.7px;width:24.4px;height:78.3px;background:#005b73"></div>
<div class="a" style="left:1610.9px;top:889.5px;width:24.4px;height:33.5px;background:#d9d916"></div>
<div class="a" style="left:1635.3px;top:822.4px;width:24.4px;height:100.6px;background:#e9e66f"></div>
<div class="a" style="left:1659.7px;top:721.8px;width:24.4px;height:201.2px;background:#7ba12c"></div>
<div class="a" style="left:1485.3px;width:300px;text-align:center;top:927.6px;font-size:14px;line-height:16.8px;color:#dfe6ea;font-weight:normal">2029</div>
<div class="a" style="left:1754.0px;top:700px;width:1px;height:223px;background-image:linear-gradient(180deg,#58788a 50%,transparent 50%);background-size:1px 4px;opacity:0.2"></div>
<div class="a" style="left:1708.0px;top:844.7px;width:24.4px;height:78.3px;background:#005b73"></div>
<div class="a" style="left:1732.4px;top:889.5px;width:24.4px;height:33.5px;background:#d9d916"></div>
<div class="a" style="left:1756.8px;top:822.4px;width:24.4px;height:100.6px;background:#e9e66f"></div>
<div class="a" style="left:1781.2px;top:721.8px;width:24.4px;height:201.2px;background:#7ba12c"></div>
<div class="a" style="left:1606.8px;width:300px;text-align:center;top:927.6px;font-size:14px;line-height:16.8px;color:#dfe6ea;font-weight:normal">2030</div>
<div class="a" style="left:1364px;width:300px;text-align:center;top:944.7px;font-size:18px;line-height:21.6px;color:#72a040;font-weight:normal">Year</div>
</body></html>
